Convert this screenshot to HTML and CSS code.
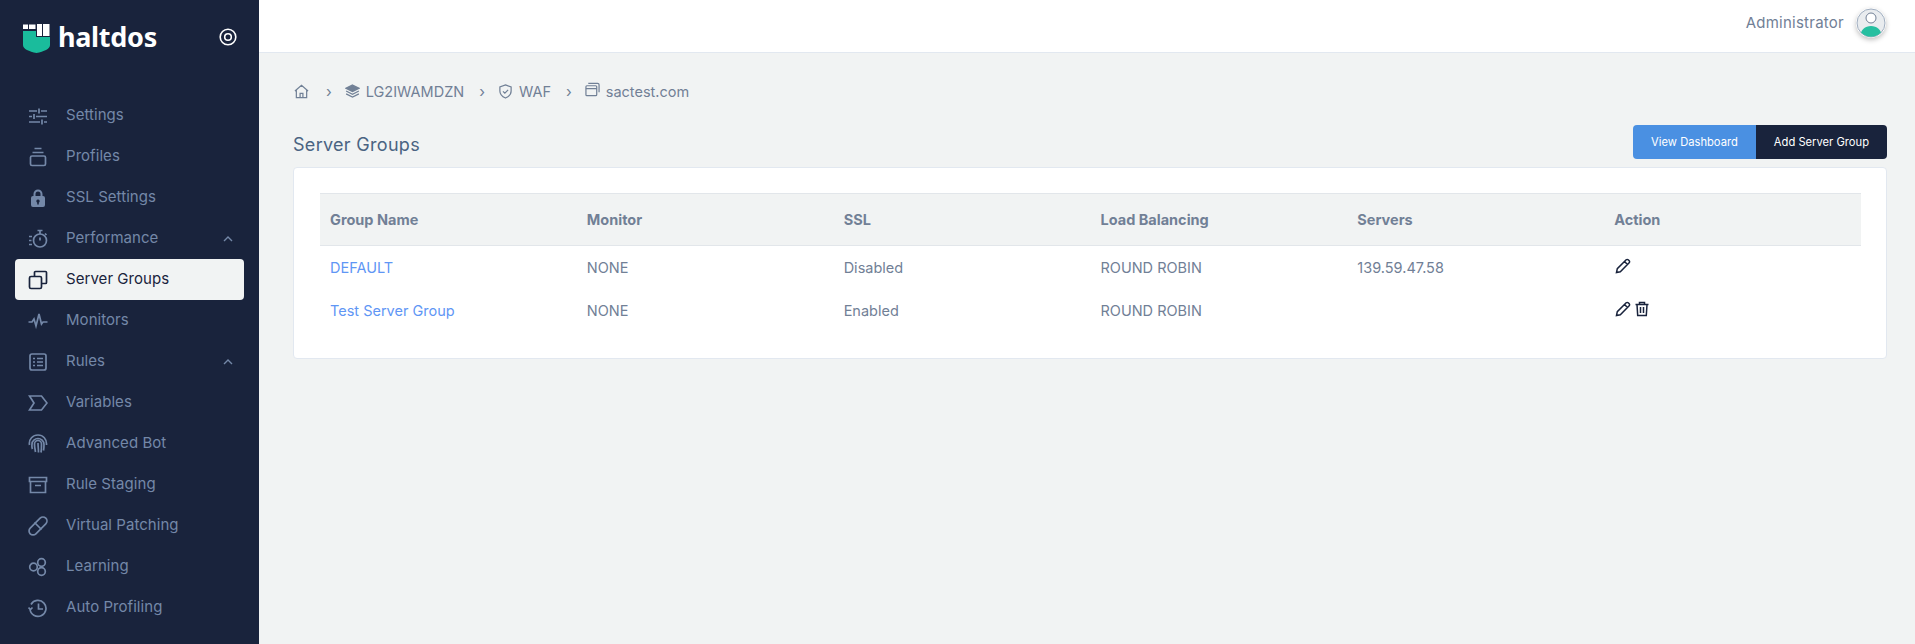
FILE: index.html
```html
<!DOCTYPE html>
<html lang="en">
<head>
<meta charset="utf-8">
<title>Server Groups</title>
<link rel="stylesheet" href="styles.css">
</head>
<body>
<div class="app">
  <aside class="sidebar">
    <div class="brand">
      <svg class="logo" viewBox="0 0 27 29"><path fill="#1abc9c" d="M0 7h13v6h14v8c0 4-6 6.500-13.500 8C6 27.500 0 25 0 21z"/><path fill="#fff" d="M0 .5h5V5H0zM6 .5h6.500V5H6zM14 0h5v12h-5zM20 0h6.500v12H20z"/></svg>
      <span class="brand-name">haltdos</span>
      <svg class="ring" viewBox="0 0 18 18"><circle cx="9" cy="9" r="7.800" fill="none" stroke="#fff" stroke-width="1.600"/><circle cx="9" cy="9" r="3.300" fill="none" stroke="#fff" stroke-width="1.600"/></svg>
    </div>
    <nav class="nav">
      <a class="item"><svg class="ic" viewBox="0 0 20 20"><path d="M1 5h8M13 5h6M11 2.500v5M1 10.500h3M8 10.500h11M6 8v5M1 16h11M16 16h3M14 13.500v5"/></svg><span>Settings</span></a>
      <a class="item"><svg class="ic" viewBox="0 0 20 20"><path d="M6.500 1.500h7M4.500 5.500h11"/><rect x="2.500" y="9" width="15" height="9.500" rx="1.500"/></svg><span>Profiles</span></a>
      <a class="item"><svg class="ic" viewBox="0 0 20 20"><path class="solid" fill-rule="evenodd" d="M5.500 8V6a4.500 4.500 0 0 1 9 0v2h.500A2 2 0 0 1 17 10v7a2 2 0 0 1-2 2H5a2 2 0 0 1-2-2v-7a2 2 0 0 1 2-2zm2 0h5V6a2.500 2.500 0 0 0-5 0zM10 11.500a1.700 1.700 0 0 0-.8 3.200V16.500h1.600v-1.800a1.700 1.700 0 0 0-.8-3.200z"/></svg><span>SSL Settings</span></a>
      <a class="item"><svg class="ic" viewBox="0 0 20 20"><circle cx="12" cy="11.500" r="6.500"/><path d="M9.500 1.500h5M12 1.500V5M12 8.500v3M1 7.500h3M1 11.500h2.500M1 15.500h3M17 4.500l1.500 1.500"/></svg><span>Performance</span><svg class="chev" viewBox="0 0 10 6"><path d="M1 5l4-4 4 4"/></svg></a>
      <a class="item active"><svg class="ic" viewBox="0 0 20 20"><rect x="1.500" y="6.500" width="12" height="12" rx="1.500"/><path d="M6.500 6.500V2.500a1 1 0 0 1 1-1h10a1 1 0 0 1 1 1v10a1 1 0 0 1-1 1h-4"/></svg><span>Server Groups</span></a>
      <a class="item"><svg class="ic" viewBox="0 0 20 20"><path d="M.5 11h3.500l2-3 2 7 3-12 2.500 10 1.500-2h4.500"/></svg><span>Monitors</span></a>
      <a class="item"><svg class="ic" viewBox="0 0 20 20"><rect x="2" y="2" width="16" height="16" rx="2"/><path d="M5 6.500h2M9 6.500h6M5 10h2M9 10h6M5 13.500h2M9 13.500h6"/></svg><span>Rules</span><svg class="chev" viewBox="0 0 10 6"><path d="M1 5l4-4 4 4"/></svg></a>
      <a class="item"><svg class="ic" viewBox="0 0 20 20"><path d="M1.500 3h12l5.500 7-5.500 7H1.500L6 10z"/></svg><span>Variables</span></a>
      <a class="item"><svg class="ic" viewBox="0 0 20 20"><path d="M1.500 11C.5 5 5 1 10 1s9 4 8.500 10M4.500 15c-1-2-.5-4-.5-5 0-3 3-5.500 6-5.500S16 7 16 10.500c0 2 0 4-.5 6M7.500 18c-.5-3-1-5-1-8a3.500 3.500 0 0 1 7 0c0 3 0 6-.5 8.500M10 9c0 3 .5 6 .5 9.500"/></svg><span>Advanced Bot</span></a>
      <a class="item"><svg class="ic" viewBox="0 0 20 20"><path d="M1.500 2.500h17v4h-17zM2.500 6.500v11h15v-11M7 10.500h6"/></svg><span>Rule Staging</span></a>
      <a class="item"><svg class="ic" viewBox="0 0 20 20"><rect x="-1" y="6" width="22" height="8" rx="4" transform="rotate(-45 10 10)"/><path d="M6.500 6.500l7 7M10 8.500v.01M8 10.500v.01M12 10v.01M10 12v.01"/></svg><span>Virtual Patching</span></a>
      <a class="item"><svg class="ic" viewBox="0 0 20 20"><circle cx="13.500" cy="5.500" r="3.800"/><circle cx="13.500" cy="14.500" r="3.800"/><circle cx="5.500" cy="10" r="3.800"/></svg><span>Learning</span></a>
      <a class="item"><svg class="ic" viewBox="0 0 20 20"><path d="M3 6.500A8 8 0 1 1 2 11M.5 9.500L2.500 11.500 4.500 9.500M10.500 5.500v5.500h4.500"/></svg><span>Auto Profiling</span></a>
    </nav>
  </aside>
  <div class="main">
    <header class="topbar">
      <span class="user">Administrator</span>
      <span class="avatar"><svg viewBox="0 0 30 30"><defs><clipPath id="av"><circle cx="15" cy="15" r="13.700"/></clipPath></defs><circle cx="15" cy="15" r="14" fill="#e9ecef" stroke="#a0aec0" stroke-width="1"/><g clip-path="url(#av)"><path d="M4 30c0-8 5-12 11-12s11 4 11 12z" fill="#26bfa0"/></g><circle cx="15" cy="10" r="5" fill="#fff" stroke="#718096" stroke-width="1"/></svg></span>
    </header>
    <main class="content">
      <div class="crumbs">
        <svg class="cic home" viewBox="0 0 16 16"><path d="M1 7.500L8 1.500l7 6M2.500 6.500V14.500h11V6.500M6.500 14.500V10h3v4.500"/></svg>
        <span class="sep">›</span>
        <svg class="cic" viewBox="0 0 16 16"><path class="fillc" d="M8 1l7 3.500L8 8 1 4.500z"/><path d="M1.200 7.500L8 11l6.800-3.500M1.200 10.500L8 14l6.800-3.500"/></svg>
        <span class="ctext">LG2IWAMDZN</span>
        <span class="sep">›</span>
        <svg class="cic" viewBox="0 0 16 16"><path d="M8 1l6 2.200v4.300c0 3.500-2.500 6-6 7.500-3.500-1.500-6-4-6-7.500V3.200zM5.300 7.800l2 2 3.500-3.500"/></svg>
        <span class="ctext">WAF</span>
        <span class="sep">›</span>
        <svg class="cic up" viewBox="0 0 16 16"><rect x="1" y="4" width="11.500" height="10.500" rx="1"/><path d="M3.500 1.500h10a1.500 1.500 0 0 1 1.500 1.500v8M1 7h11.500"/></svg>
        <span class="ctext">sactest.com</span>
      </div>
      <div class="title-row">
        <h1>Server Groups</h1>
        <div class="btns"><a class="btn blue">View Dashboard</a><a class="btn dark">Add Server Group</a></div>
      </div>
      <section class="card">
        <table>
          <thead><tr><th>Group Name</th><th>Monitor</th><th>SSL</th><th>Load Balancing</th><th>Servers</th><th>Action</th></tr></thead>
          <tbody>
            <tr><td><a class="link">DEFAULT</a></td><td>NONE</td><td>Disabled</td><td>ROUND ROBIN</td><td>139.59.47.58</td><td><span class="acts"><svg class="act" viewBox="0 0 16 16"><path d="M1.500 14.500l.8-3.800L11.200 1.800a1.400 1.400 0 0 1 2 0l1 1a1.400 1.400 0 0 1 0 2L5.300 13.700zM9.500 3.500l3 3"/></svg></span></td></tr>
            <tr><td><a class="link">Test Server Group</a></td><td>NONE</td><td>Enabled</td><td>ROUND ROBIN</td><td></td><td><span class="acts"><svg class="act" viewBox="0 0 16 16"><path d="M1.500 14.500l.8-3.800L11.200 1.800a1.400 1.400 0 0 1 2 0l1 1a1.400 1.400 0 0 1 0 2L5.300 13.700zM9.500 3.500l3 3"/></svg><svg class="act" viewBox="0 0 16 16"><path d="M1.500 3.500h13M5.500 3.500V1.500h5v2M3 3.500l.7 11h8.600l.7-11M6.500 6v6M9.500 6v6"/></svg></span></td></tr>
          </tbody>
        </table>
      </section>
    </main>
  </div>
</div>
</body>
</html>
```
FILE: styles.css
```css
* { box-sizing: border-box; }
html, body { margin: 0; height: 100%; overflow: hidden; }
body { font-family: "Inter", "Noto Sans", "Liberation Sans", sans-serif; background: #f1f3f3; color: #718096; }
.app { display: flex; height: 644px; }
.sidebar { width: 259px; flex: none; background: #19233c; padding: 0 15px; }
.brand { height: 41px; margin-top: 16px; display: flex; align-items: center; padding-left: 8px; }
.logo { width: 27px; height: 29px; flex: none; margin-top: 4px; }
.brand-name { margin-left: 8px; font-family: "Noto Sans", sans-serif; font-weight: 700; font-size: 27px; color: #fff; letter-spacing: -.3px; }
.ring { width: 18px; height: 18px; margin-left: auto; margin-right: 7px; }
.nav { margin-top: 38px; display: flex; flex-direction: column; }
.item { display: flex; align-items: center; height: 41px; padding-left: 13px; font-size: 15px; color: #7488a8; border-radius: 4px; }
.item span { flex: 1; padding-bottom: 2px; letter-spacing: .05px; }
.ic { width: 20px; height: 20px; flex: none; margin-right: 18px; fill: none; stroke: currentColor; stroke-width: 1.700; }
.ic .solid { fill: currentColor; stroke: none; }
.chev { width: 10px; height: 6px; flex: none; margin-right: 11px; fill: none; stroke: currentColor; stroke-width: 1.400; }
.item.active { background: #f1f3f3; color: #19233c; }
.main { flex: 1; min-width: 0; }
.topbar { height: 53px; background: #fff; border-bottom: 1px solid #e2e8f0; display: flex; align-items: center; justify-content: flex-end; padding: 0 29px 7px 0; }
.user { font-size: 15px; letter-spacing: .25px; color: #718096; margin-right: 12px; }
.avatar { width: 30px; height: 30px; border-radius: 50%; box-shadow: 0 2px 5px rgba(0,0,0,.25); }
.avatar svg { display: block; width: 30px; height: 30px; }
.content { padding: 0 28px 0 34px; }
.crumbs { display: flex; align-items: center; height: 24px; margin-top: 26px; font-size: 14.500px; color: #718096; }
.cic { width: 15px; height: 15px; flex: none; fill: none; stroke: currentColor; stroke-width: 1.300; }
.cic .fillc { fill: currentColor; }
.cic.up { position: relative; top: -2px; }
.cic.home { margin: 0 2px 0 1px; }
.sep { margin: 0 13px 0 15px; font-size: 15px; }
.ctext { margin-left: 6px; }
.title-row { display: flex; justify-content: space-between; align-items: flex-end; margin-top: 22px; }
h1 { margin: 0 0 4px; font-size: 18px; font-weight: 400; letter-spacing: .3px; color: #4a6382; }
.btns { display: flex; border-radius: 4px; overflow: hidden; }
.btn { display: flex; align-items: center; height: 34px; padding: 0 18px; font-size: 11.200px; color: #fff; }
.blue { background: #4a90e2; }
.dark { background: #19233c; }
.card { margin-top: 8px; height: 192px; background: #fff; border: 1px solid #e2e8f0; border-radius: 4px; padding: 25px 25px 0 26px; }
table { width: 100%; border-collapse: collapse; table-layout: fixed; font-size: 14.500px; }
th { height: 52px; background: #f1f3f3; border-top: 1px solid #e2e6ea; border-bottom: 1px solid #e2e6ea; text-align: left; padding: 0 10px; font-weight: 700; color: #718096; }
td { height: 43px; padding: 0 10px; color: #718096; }
.link { color: #5f96f5; }
.acts { display: flex; align-items: center; gap: 3px; margin-left: 1px; position: relative; top: -1px; }
.act { width: 16px; height: 16px; fill: none; stroke: #19233c; stroke-width: 1.500; }
```
